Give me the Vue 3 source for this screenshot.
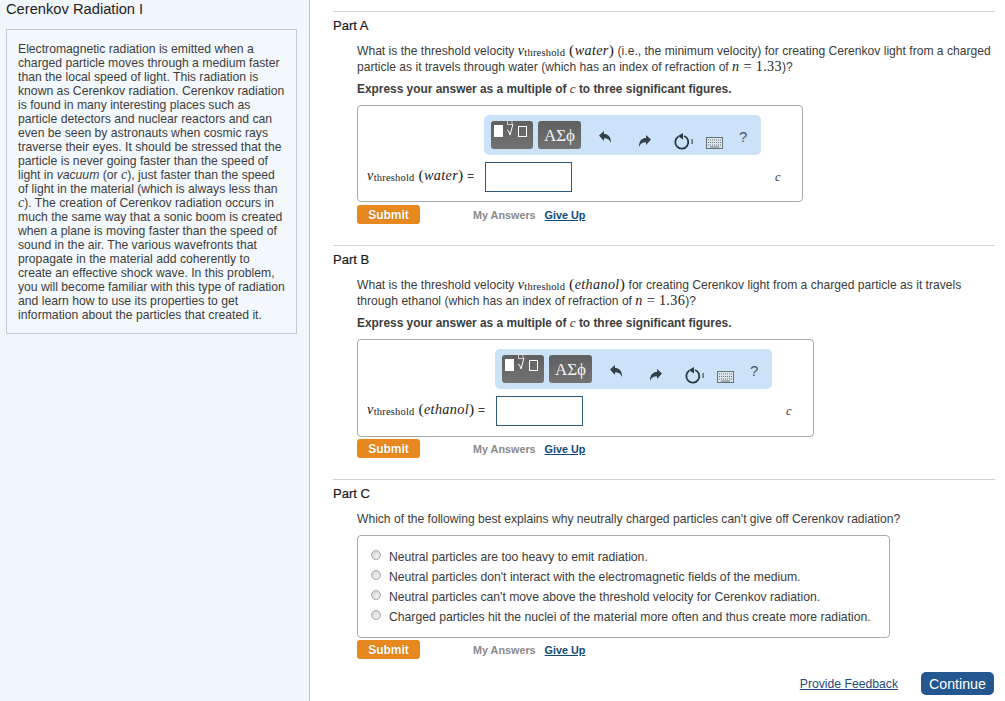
<script setup>
const sidebarLines = [
  'Electromagnetic radiation is emitted when a',
  'charged particle moves through a medium faster',
  'than the local speed of light. This radiation is',
  'known as Cerenkov radiation. Cerenkov radiation',
  'is found in many interesting places such as',
  'particle detectors and nuclear reactors and can',
  'even be seen by astronauts when cosmic rays',
  'traverse their eyes. It should be stressed that the',
  'particle is never going faster than the speed of',
]
const sidebarLinesEnd = [
  'much the same way that a sonic boom is created',
  'when a plane is moving faster than the speed of',
  'sound in the air. The various wavefronts that',
  'propagate in the material add coherently to',
  'create an effective shock wave. In this problem,',
  'you will become familiar with this type of radiation',
  'and learn how to use its properties to get',
  'information about the particles that created it.',
]
const parts = [
  { title: 'Part A', medium: 'water', n: '1.33', lead: ' (i.e., the minimum velocity) for creating Cerenkov light from a charged', second: 'particle as it travels through water (which has an index of refraction of ', box: 'box-a' },
  { title: 'Part B', medium: 'ethanol', n: '1.36', lead: ' for creating Cerenkov light from a charged particle as it travels', second: 'through ethanol (which has an index of refraction of ', box: 'box-b' },
]
const options = [
  'Neutral particles are too heavy to emit radiation.',
  "Neutral particles don't interact with the electromagnetic fields of the medium.",
  "Neutral particles can't move above the threshold velocity for Cerenkov radiation.",
  'Charged particles hit the nuclei of the material more often and thus create more radiation.',
]
</script>

<template>
  <div class="page">
    <aside class="sidebar">
      <h1 class="title">Cerenkov Radiation I</h1>
      <div class="intro">
        <div v-for="l in sidebarLines" :key="l">{{ l }}</div>
        <div>light in <i>vacuum</i> (or <span class="mi">c</span>), just faster than the speed</div>
        <div>of light in the material (which is always less than</div>
        <div><span class="mi">c</span>). The creation of Cerenkov radiation occurs in</div>
        <div v-for="l in sidebarLinesEnd" :key="l">{{ l }}</div>
      </div>
    </aside>

    <main class="main">
      <section v-for="p in parts" :key="p.title" class="part">
        <h2 class="part-title">{{ p.title }}</h2>
        <div class="question">
          <div>What is the threshold velocity <span class="math"><span class="mi">v</span><span class="sub">threshold</span> <span class="paren">(</span><span class="mi">{{ p.medium }}</span><span class="paren">)</span></span>{{ p.lead }}</div>
          <div>{{ p.second }}<span class="math"><span class="mi">n</span> = {{ p.n }}</span>)?</div>
        </div>
        <p class="express">Express your answer as a multiple of <span class="mi plain">c</span> to three significant figures.</p>
        <div class="answer-box" :class="p.box">
          <div class="toolbar">
            <div class="tb-btn tb-math">
              <svg width="36" height="24" viewBox="0 0 36 24">
                <rect x="0" y="4" width="9" height="12" fill="#fff" />
                <rect x="13.500" y="-0.500" width="4.500" height="4" fill="none" stroke="#e8e8e8" stroke-width="0.800" />
                <path d="M13 9l1.500 1 1.500 4 3-11" fill="none" stroke="#fff" stroke-width="1" />
                <rect x="24.500" y="5.500" width="8" height="10" fill="none" stroke="#fff" stroke-width="1" />
              </svg>
            </div>
            <div class="tb-btn tb-greek">ΑΣϕ</div>
            <svg class="ic ic-undo" width="14" height="14" viewBox="0 0 14 14"><path d="M1 5.500L6 1v3c4 0 7 2.500 7 9-1.500-3.500-3.500-4.800-7-4.800V11z" fill="#34404a" /></svg>
            <svg class="ic ic-redo" width="14" height="14" viewBox="0 0 14 14"><path d="M13 5.500L8 1v3c-4 0-7 2.500-7 9 1.500-3.500 3.500-4.800 7-4.800V11z" fill="#34404a" /></svg>
            <svg class="ic ic-reset" width="22" height="18" viewBox="0 0 22 18"><path d="M5.500 3.500a6.500 6.500 0 1 0 5.500-0.500" fill="none" stroke="#2a3640" stroke-width="1.800" /><path d="M10 0v6.500L5 3z" fill="#2a3640" /><rect x="18.500" y="6" width="1.200" height="5" fill="#44525c" /></svg>
            <svg class="ic ic-kbd" width="17" height="12" viewBox="0 0 17 12"><rect x="0.500" y="0.500" width="16" height="11" fill="#dfe6ea" stroke="#66727a" /><path d="M2 3h13M2 5.500h13M2 8h13" stroke="#66727a" stroke-dasharray="1 1" /><path d="M4 10h9" stroke="#66727a" /></svg>
            <span class="help">?</span>
          </div>
          <div class="answer-row">
            <label class="answer-label math"><span class="mi">v</span><span class="sub">threshold</span> <span class="paren">(</span><span class="mi">{{ p.medium }}</span><span class="paren">)</span><span class="eq"> =</span></label>
            <div class="answer-input"></div>
            <span class="unit mi">c</span>
          </div>
        </div>
        <div class="actions">
          <button class="submit">Submit</button>
          <span class="my-answers">My Answers</span>
          <a class="give-up">Give Up</a>
        </div>
      </section>

      <section class="part part-c">
        <h2 class="part-title">Part C</h2>
        <div class="question q-c">Which of the following best explains why neutrally charged particles can't give off Cerenkov radiation?</div>
        <div class="options-box">
          <label v-for="o in options" :key="o" class="option">
            <span class="radio"></span>
            <span>{{ o }}</span>
          </label>
        </div>
        <div class="actions actions-c">
          <button class="submit">Submit</button>
          <span class="my-answers">My Answers</span>
          <a class="give-up">Give Up</a>
        </div>
      </section>

      <footer class="footer">
        <a class="feedback">Provide Feedback</a>
        <button class="continue">Continue</button>
      </footer>
    </main>
  </div>
</template>

<style>
html, body { margin: 0; background: #fff; overflow: hidden; }
</style>

<style scoped>
.page {
  display: flex;
  height: 701px;
  font-family: "Liberation Sans", Arial, sans-serif;
  font-size: 12.2px;
  color: #3b3b3b;
  overflow: hidden;
}
.sidebar {
  flex: none;
  background: #f1f6fb;
  border-right: 1px solid #b5c6d3;
  box-sizing: border-box;
  width: 310px;
  padding: 0 12px 0 6px;
}
.title {
  margin: 0;
  height: 29px;
  padding-top: 1px;
  box-sizing: border-box;
  font-size: 14.7px;
  font-weight: 400;
  line-height: 17px;
  color: #1d1d1d;
}
.intro {
  border: 1px solid #bccbd6;
  background: #f3f8fc;
  padding: 12px 6px 12px 11px;
  line-height: 14px;
  height: 305px;
  box-sizing: border-box;
  white-space: nowrap;
  color: #3d3d3d;
}
.mi {
  font-family: "Liberation Serif", serif;
  font-style: italic;
  font-size: 14px;
  line-height: 1;
}
.mi.plain { font-size: 13px; font-weight: 400; }
.math {
  font-family: "Liberation Serif", serif;
  font-size: 14.2px;
  line-height: 1;
  letter-spacing: 0.35px;
  color: #222;
  white-space: nowrap;
}
.math .mi { font-size: 14.2px; }
.sub { font-size: 10.5px; letter-spacing: 0.2px; line-height: 1; vertical-align: -1px; }
.paren { font-size: 15.5px; line-height: 1; }
.main {
  flex: 1;
  min-width: 0;
  padding: 11px 10px 0 23px;
}
.part {
  border-top: 1px solid #d4d4d4;
  height: 233px;
}
.part-title {
  margin: 0;
  padding-top: 6px;
  font-size: 13px;
  font-weight: 400;
  line-height: 15px;
  color: #1a1a1a;
  -webkit-text-stroke: 0.2px #1a1a1a;
}
.question {
  margin: 9px 0 0 24px;
  font-size: 12.1px;
  line-height: 16px;
  white-space: nowrap;
}
.express {
  margin: 7px 0 0 24px;
  line-height: 15px;
  font-size: 11.9px;
  font-weight: 700;
  color: #3d3d3d;
  white-space: nowrap;
}
.answer-box {
  margin: 8px 0 0 24px;
  border: 1px solid #a9a9a9;
  border-radius: 4px;
  height: 97px;
  box-sizing: border-box;
  padding: 9px 0 0 9px;
}
.box-a { width: 446px; }
.box-b { width: 457px; height: 98px; }
.toolbar {
  margin-left: 117px;
  width: 277px;
  height: 40px;
  background: #cce2f9;
  border-radius: 5px;
  box-sizing: border-box;
  padding: 6px 0 0 7px;
  display: flex;
  align-items: flex-start;
}
.box-b .toolbar { margin-left: 128px; }
.tb-btn {
  height: 28px;
  background: linear-gradient(#606060, #727272);
  border-radius: 3px;
  color: #fff;
  box-sizing: border-box;
}
.tb-math { width: 42px; padding-left: 3px; }
.tb-math svg { overflow: visible; display: block; }
.tb-greek {
  width: 43px;
  margin-left: 5px;
  font-family: "Liberation Serif", serif;
  font-size: 17px;
  line-height: 30px;
  text-align: center;
  color: #f2f2f2;
}
.ic { flex: none; display: block; }
.ic-undo { margin: 9px 0 0 17px; }
.ic-redo { margin: 13px 0 0 26px; }
.ic-reset { margin: 12px 0 0 21px; }
.ic-kbd { margin: 16px 0 0 11px; }
.help {
  margin: 7px 0 0 16px;
  font-size: 15px;
  line-height: 18px;
  color: #4a5660;
}
.answer-row {
  display: flex;
  align-items: center;
  margin-top: 7px;
  height: 30px;
}
.answer-label { width: 118px; flex: none; padding-bottom: 3px; box-sizing: border-box; }
.box-b .answer-label { width: 129px; }
.eq { font-size: 12.2px; letter-spacing: 0; font-family: "Liberation Sans", sans-serif; color: #3b3b3b; }
.answer-input {
  width: 87px;
  height: 30px;
  box-sizing: border-box;
  border: 1px solid #2d5a7e;
  background: #fff;
}
.unit { margin-left: 203px; font-size: 12.5px; }
.actions {
  display: flex;
  align-items: center;
  margin: 3px 0 0 24px;
  height: 19px;
  font-size: 10.8px;
}
.box-b + .actions { margin-top: 2px; }
.submit {
  width: 63px;
  height: 19px;
  padding: 0;
  border: 0;
  border-radius: 3px;
  background: #e8891f;
  color: #fff;
  font: 700 12px "Liberation Sans", sans-serif;
  text-shadow: 0 0 1px #a85c00;
}
.my-answers {
  margin-left: 53px;
  font-weight: 700;
  color: #8a8a8a;
}
.give-up {
  margin-left: 9px;
  color: #124a78;
  font-weight: 700;
  text-decoration: underline;
}
.part-c { height: auto; }
.q-c { margin-top: 10px; }
.options-box {
  margin: 8px 0 0 24px;
  width: 533px;
  height: 103px;
  box-sizing: border-box;
  border: 1px solid #a9a9a9;
  border-radius: 4px;
  padding: 11px 0 0 13px;
}
.option {
  display: flex;
  align-items: center;
  height: 20px;
  white-space: nowrap;
}
.radio {
  width: 10px;
  height: 10px;
  flex: none;
  margin: -5px 8px 0 0;
  border-radius: 50%;
  border: 1px solid #a9a9a9;
  box-sizing: border-box;
  background: radial-gradient(circle at 60% 65%, #f2f2f2, #cfcfcf);
}
.actions-c { margin-top: 2px; }
.footer {
  display: flex;
  align-items: center;
  justify-content: flex-end;
  margin-top: 13px;
  height: 23px;
  padding-right: 1px;
}
.feedback {
  margin-top: 1px;
  color: #1f4a7c;
  text-decoration: underline;
}
.continue {
  margin-left: 23px;
  width: 73px;
  height: 23px;
  padding: 0;
  border: 0;
  border-radius: 5px;
  background: #24568f;
  color: #fff;
  font: 400 14.2px "Liberation Sans", sans-serif;
}
</style>
